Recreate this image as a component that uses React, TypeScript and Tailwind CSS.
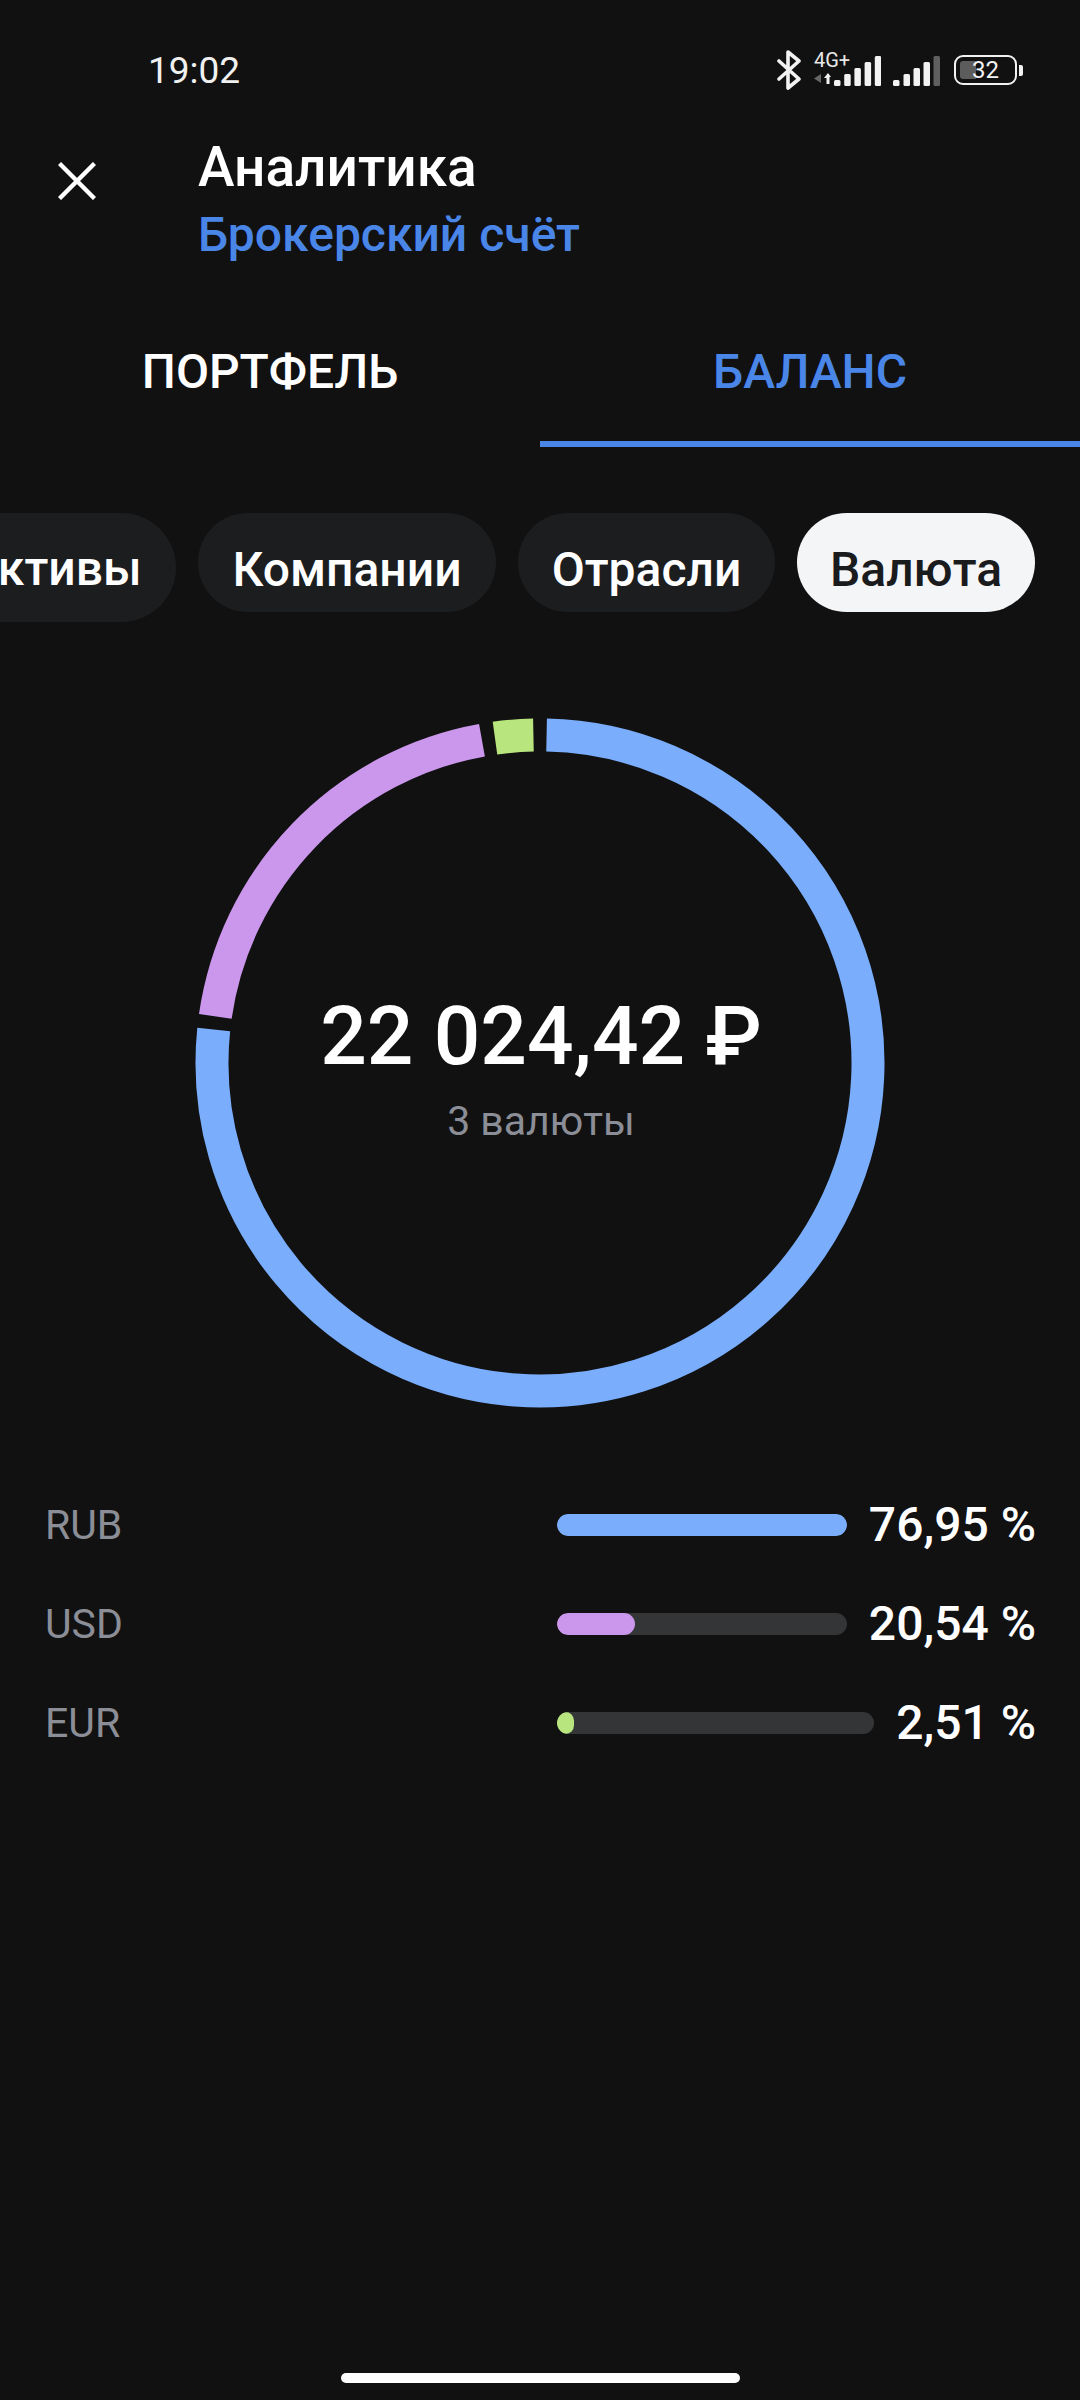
const RING_R = 328;
const RING_C = 345;
const GAP_DEG = 1.15;

const segments = [
  { from: 0, to: 277.02, color: "#7aaefc" },
  { from: 277.02, to: 350.96, color: "#cb97ec" },
  { from: 350.96, to: 360, color: "#b9e57e" },
];

const rows = [
  { code: "RUB", value: "76,95 %", fill: 100, color: "bg-[#7aaefc]" },
  { code: "USD", value: "20,54 %", fill: 27, color: "bg-[#cb97ec]" },
  { code: "EUR", value: "2,51 %", fill: 5.3, color: "bg-[#b9e57e]" },
];

function point(deg: number) {
  const a = (deg * Math.PI) / 180;
  return `${RING_C + RING_R * Math.sin(a)} ${RING_C - RING_R * Math.cos(a)}`;
}

function arc(from: number, to: number) {
  const start = from + GAP_DEG;
  const end = to - GAP_DEG;
  const large = end - start > 180 ? 1 : 0;
  return `M ${point(start)} A ${RING_R} ${RING_R} 0 ${large} 1 ${point(end)}`;
}

function Bluetooth() {
  return (
    <svg width="24" height="40" viewBox="0 0 24 40" fill="none" stroke="#f2f2f2" strokeWidth="3.6" strokeLinecap="round" strokeLinejoin="round">
      <path d="M2 11 L22 29 L11 38 L11 2 L22 11 L2 29" />
    </svg>
  );
}

function Signal({ lastDim }: { lastDim?: boolean }) {
  const bars = [
    { x: 0, h: 6 },
    { x: 10.5, h: 12 },
    { x: 20.5, h: 18 },
    { x: 30.5, h: 24 },
    { x: 40.5, h: 30 },
  ];
  return (
    <svg width="47" height="30" viewBox="0 0 47 30">
      {bars.map((b, i) => (
        <rect
          key={i}
          x={b.x}
          y={30 - b.h}
          width="6.5"
          height={b.h}
          rx="1.5"
          fill={lastDim && i === 4 ? "#5f5f5f" : "#f2f2f2"}
        />
      ))}
    </svg>
  );
}

function NetworkIcon() {
  return (
    <div className="relative h-[40px] w-[67px]">
      <span className="absolute left-0 top-0 text-[20px] leading-[20px] text-[#e8e8e8]">4G+</span>
      <svg className="absolute bottom-[4px] left-0" width="20" height="14" viewBox="0 0 20 14">
        <path d="M7 2 L7 11 L0 6.5 Z" fill="#666" />
        <path d="M10 6 L14 1 L17 5 L15.5 5 L15.5 12 L12.5 12 L12.5 6 Z" fill="#f2f2f2" />
      </svg>
      <svg className="absolute bottom-[4px] right-0" width="47" height="30" viewBox="0 0 47 30">
        {[6, 12, 18, 24, 30].map((h, i) => (
          <rect key={i} x={i * 10.2} y={30 - h} width="6.5" height={h} rx="1.5" fill="#f2f2f2" />
        ))}
      </svg>
    </div>
  );
}

function Battery() {
  return (
    <div className="flex items-center gap-[2px]">
      <div className="relative h-[30px] w-[63px] rounded-[9px] border-[2.5px] border-[#f2f2f2] p-[4px]">
        <div className="h-full w-[16px] rounded-l-[3px] bg-[#5c5c5c]" />
        <span className="absolute inset-0 flex items-center justify-center text-[24px] leading-none text-[#f2f2f2]">32</span>
      </div>
      <div className="h-[11px] w-[4px] rounded-r-[2px] bg-[#f2f2f2]" />
    </div>
  );
}

function CloseIcon() {
  return (
    <svg width="38" height="38" viewBox="0 0 38 38" stroke="#fff" strokeWidth="4.4">
      <path d="M1.5 1.5 L36.5 36.5 M36.5 1.5 L1.5 36.5" />
    </svg>
  );
}

export default function App() {
  return (
    <div className="flex h-[2400px] w-[1080px] flex-col overflow-hidden bg-[#111112] font-['Roboto',sans-serif] text-white">
      {/* status bar */}
      <div className="flex h-[137px] items-start pl-[148px] pr-[57px] pt-[50px]">
        <span className="mt-[1px] text-[37px] leading-[40px] text-[#f0f0f0]">19:02</span>
        <div className="ml-auto flex items-center">
          <Bluetooth />
          <div className="ml-[13px]">
            <NetworkIcon />
          </div>
          <div className="ml-[12px] mt-[2px]">
            <Signal lastDim />
          </div>
          <div className="ml-[14px]">
            <Battery />
          </div>
        </div>
      </div>

      {/* header */}
      <div className="flex">
        <div className="w-[198px] pl-[58px] pt-[25px]">
          <CloseIcon />
        </div>
        <div>
          <div className="text-[55px] font-medium leading-[60px]">Аналитика</div>
          <div className="mt-[8px] text-[48px] font-medium leading-[60px] text-[#4a86e8]">Брокерский счёт</div>
        </div>
      </div>

      {/* tabs */}
      <div className="mt-[31px] grid grid-cols-2 text-[48px] font-medium">
        <div className="flex h-[151px] items-center justify-center border-b-[6px] border-transparent pt-[6px]">ПОРТФЕЛЬ</div>
        <div className="flex h-[151px] items-center justify-center border-b-[6px] border-[#4a86e8] pt-[6px] text-[#4a86e8]">БАЛАНС</div>
      </div>

      {/* filter chips */}
      <div className="mt-[66px] flex items-start justify-end gap-[22px] pr-[45px] text-[48px] font-medium">
        <div className="flex h-[109px] w-[300px] shrink-0 items-center justify-center rounded-full bg-[#1c1d1f] pl-[56px] pt-[3px]">Активы</div>
        <div className="flex h-[99px] w-[298px] shrink-0 items-center justify-center rounded-full bg-[#1c1d1f] pt-[14px]">Компании</div>
        <div className="flex h-[99px] w-[257px] shrink-0 items-center justify-center rounded-full bg-[#1c1d1f] pt-[14px]">Отрасли</div>
        <div className="flex h-[99px] w-[238px] shrink-0 items-center justify-center rounded-full bg-[#f4f5f7] pt-[14px] text-[#1a1b1d]">Валюта</div>
      </div>

      {/* donut */}
      <div className="relative mx-auto mt-[96px] h-[690px] w-[690px]">
        <svg width="690" height="690" viewBox="0 0 690 690" fill="none">
          {segments.map((s) => (
            <path key={s.color} d={arc(s.from, s.to)} stroke={s.color} strokeWidth="33" />
          ))}
        </svg>
        <div className="absolute inset-0 flex flex-col items-center justify-center pl-[2px]">
          <div className="mt-[4px] text-[82px] font-medium leading-[100px]">22 024,42 ₽</div>
          <div className="mt-[12px] text-[41px] leading-[46px] text-[#8b8e96]">3 валюты</div>
        </div>
      </div>

      {/* currency rows */}
      <div className="mt-[67px] flex flex-col pl-[45px] pr-[44px]">
        {rows.map((r) => (
          <div key={r.code} className="flex h-[99px] items-center">
            <span className="w-[512px] text-[41px] leading-[50px] text-[#8b8e96]">{r.code}</span>
            <div className="h-[22px] flex-1 overflow-hidden rounded-full bg-[#343536]">
              <div className={`h-full rounded-full ${r.color}`} style={{ width: `${r.fill}%` }} />
            </div>
            <span className="ml-[22px] text-[48px] font-medium leading-[50px]">{r.value}</span>
          </div>
        ))}
      </div>

      {/* home indicator */}
      <div className="mx-auto mt-auto mb-[17px] h-[10px] w-[399px] rounded-full bg-white" />
    </div>
  );
}
